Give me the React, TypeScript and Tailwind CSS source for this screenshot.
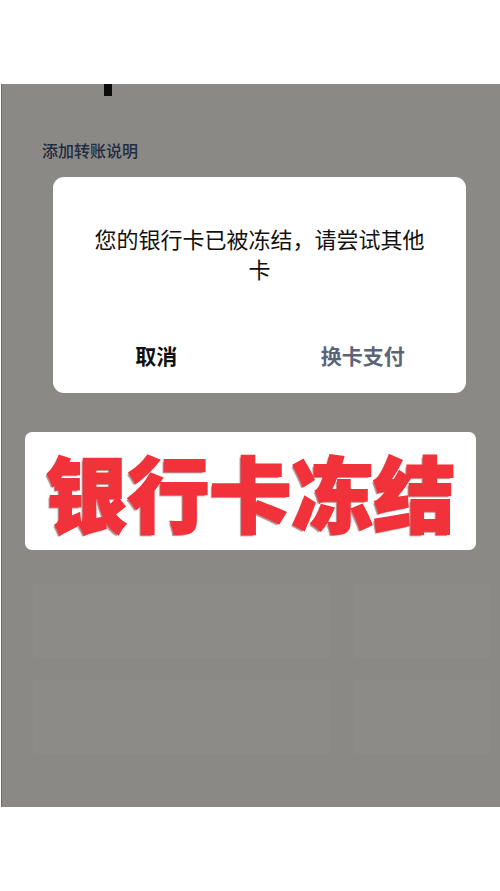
const cjk = { fontFamily: '"Noto Sans CJK SC", "Noto Sans", sans-serif' };

// faint card outlines behind the dimmed overlay
const ghostCards = [
  { id: "a", cls: "col-span-2" },
  { id: "b", cls: "" },
  { id: "c", cls: "col-span-2" },
  { id: "d", cls: "" },
];

function AlertDialog() {
  return (
    <div className="ml-[51px] mr-[34px] mt-[16px] h-[216px] rounded-[11px] bg-white flex flex-col">
      <p className="px-[40px] pt-[46px] text-center text-[22px] leading-[30px] text-[#111]">
        您的银行卡已被冻结，请尝试其他卡
      </p>
      <div className="mt-auto mb-[22px] flex">
        <button className="flex-1 text-[21px] font-bold text-[#111]">取消</button>
        <button className="flex-1 text-[21px] font-bold text-[#5b6577]">换卡支付</button>
      </div>
    </div>
  );
}

export default function App() {
  return (
    <div className="w-[500px] h-[891px] bg-white flex flex-col overflow-hidden" style={cjk}>
      <div className="h-[84px] shrink-0" />
      <div className="relative h-[723px] shrink-0 ml-[1px] bg-[#8a8985] border-l border-[#6f6e6a] flex flex-col">
        <div className="ml-[102px] w-[8px] h-[12px] bg-[#0c0c0c]" />
        <div className="ml-[40px] mt-[43px] text-[16px] leading-[22px] font-medium text-[#222b40]">添加转账说明</div>
        <AlertDialog />
        <div className="ml-[23px] mr-[24px] mt-[39px] h-[118px] rounded-[7px] bg-white flex items-center justify-center">
          <span
            className="text-[82px] leading-none font-black text-[#f2323a]"
            style={{
              WebkitTextStroke: "2px #f2323a",
              textShadow: "-2px 2px 1px rgba(110,40,40,0.55)",
            }}
          >
            银行卡冻结
          </span>
        </div>
        <div className="ml-[31px] mr-[9px] mt-[34px] grid grid-cols-3 gap-x-[24px] gap-y-[22px]">
          {ghostCards.map((c) => (
            <div key={c.id} className={`h-[74px] bg-[#8c8b87] ${c.cls}`} />
          ))}
        </div>
      </div>
    </div>
  );
}
